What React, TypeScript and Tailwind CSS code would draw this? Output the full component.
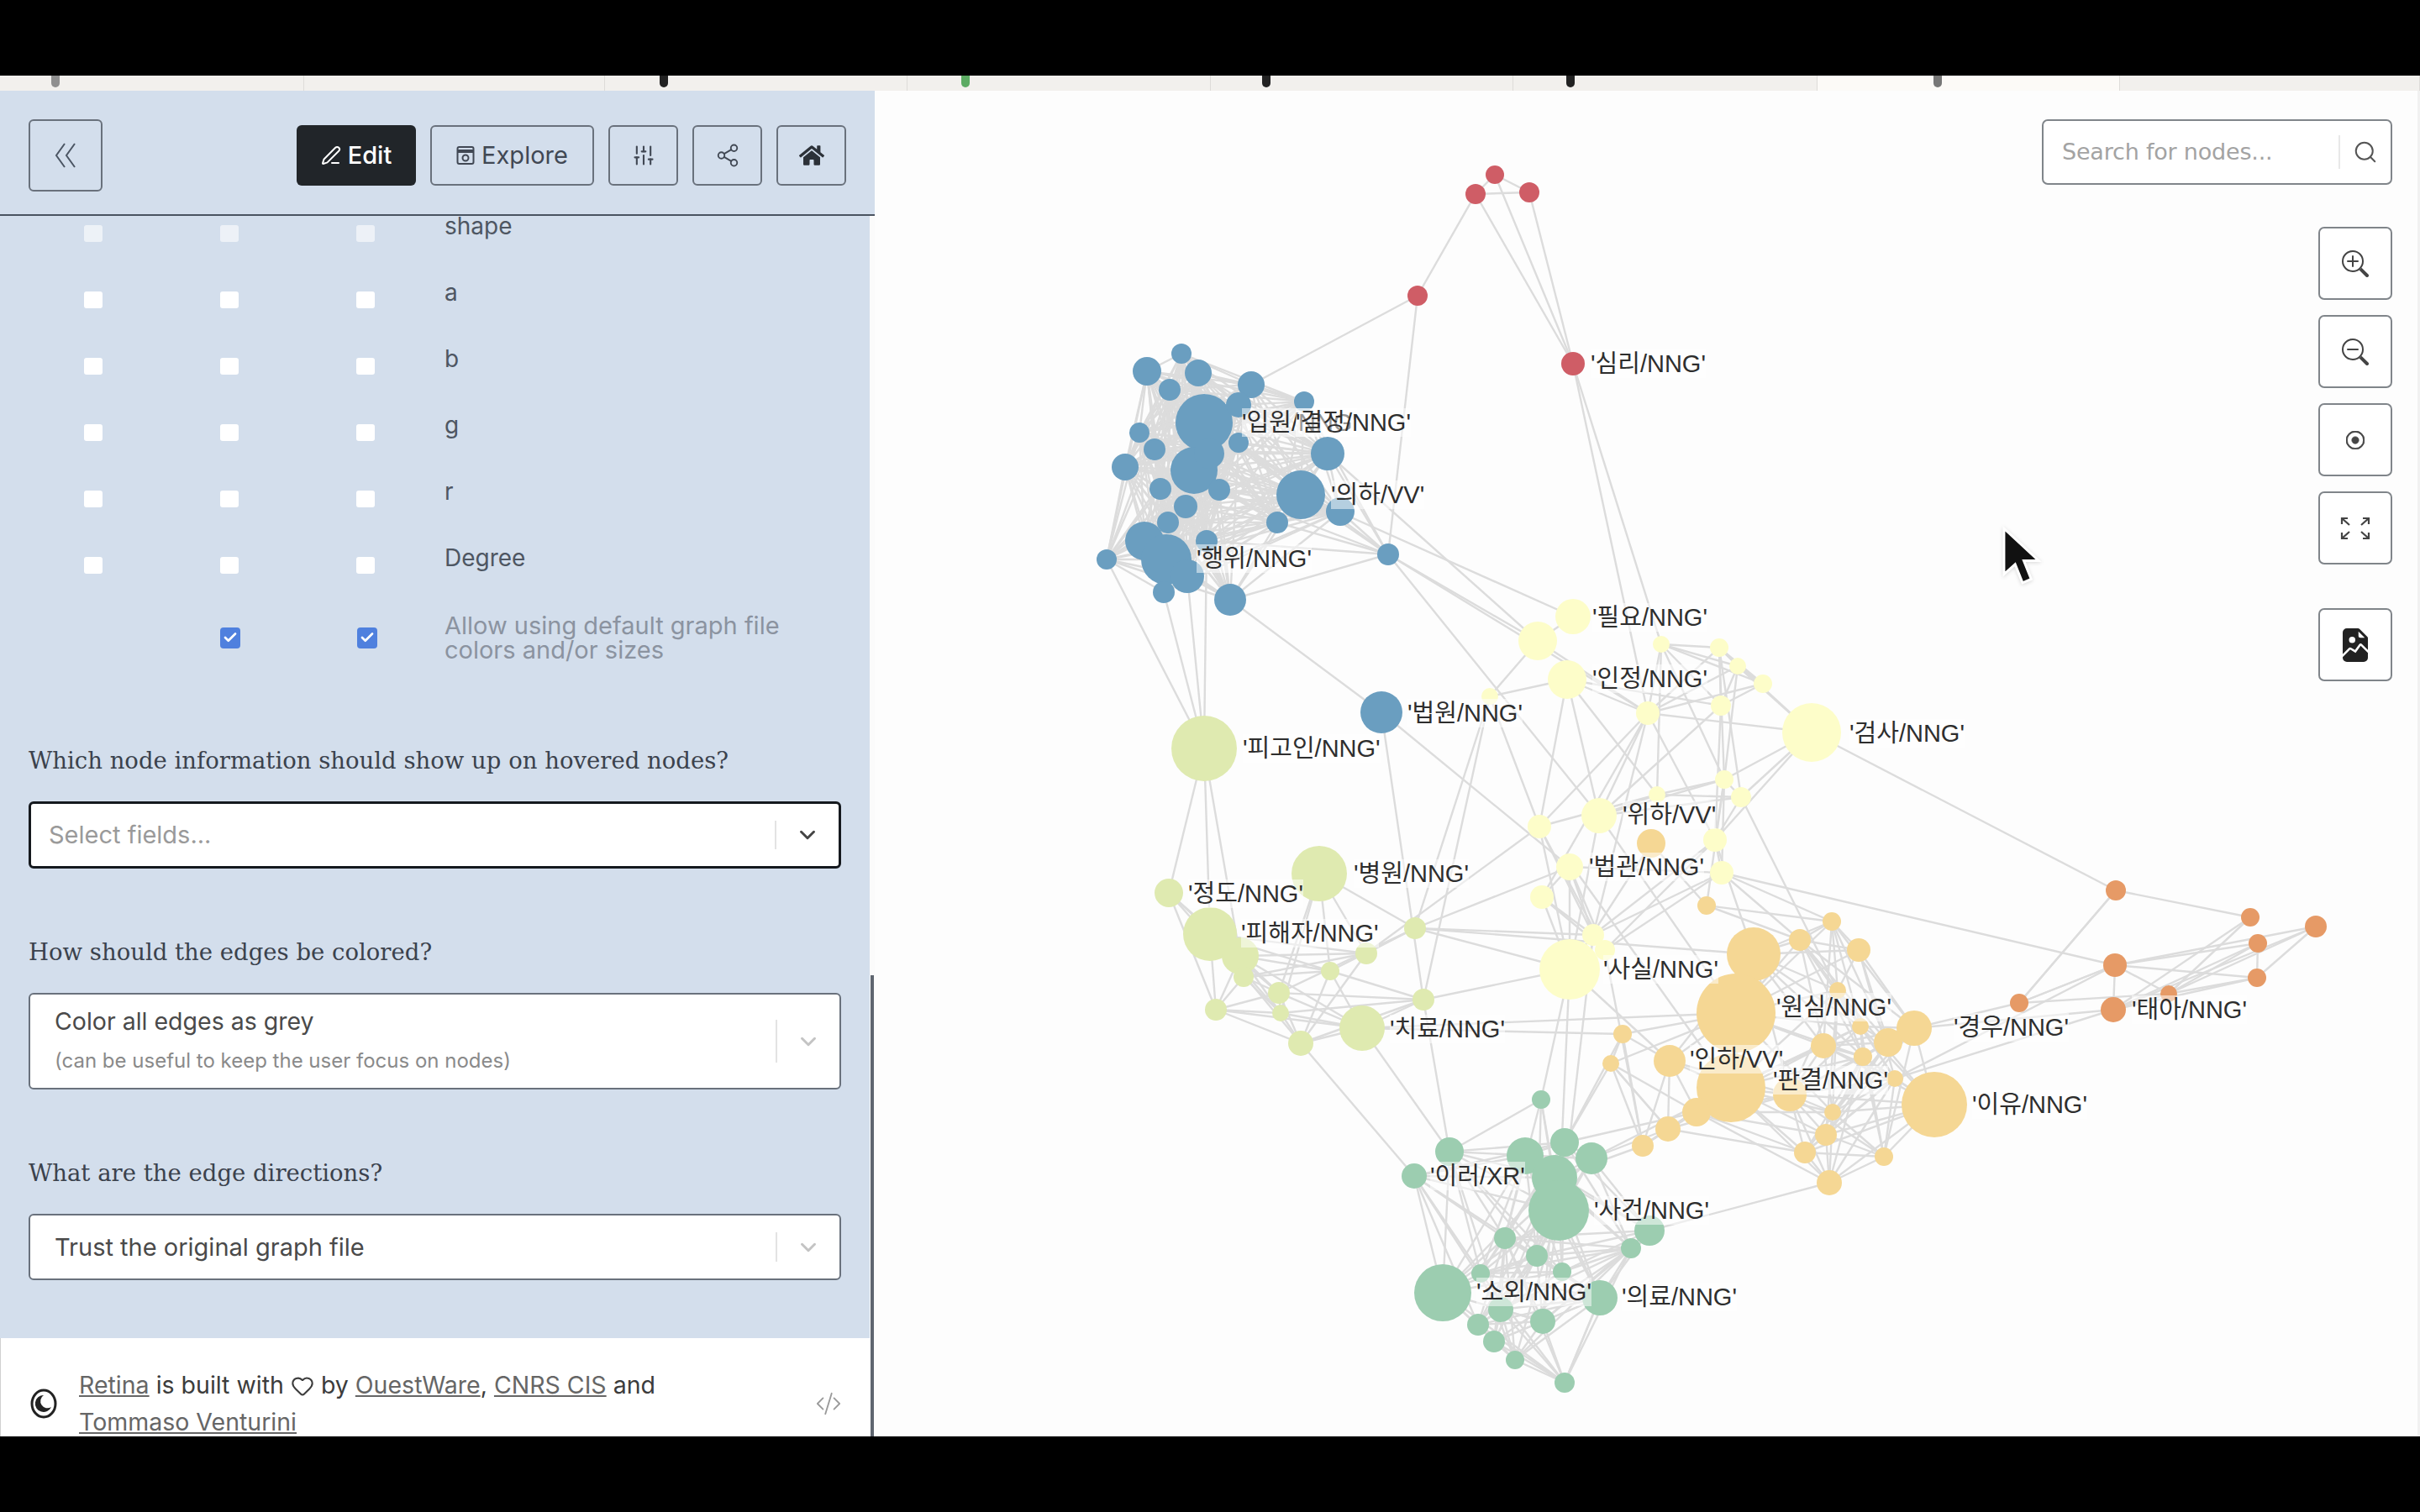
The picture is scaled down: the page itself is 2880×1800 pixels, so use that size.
import { ChevronDown, Check, Heart, PenLine, Search, Share2, SlidersVertical } from "lucide-react";
import { FaHome } from "react-icons/fa";
import { BsCodeSlash, BsFileEarmarkImageFill, BsRecordCircle, BsZoomIn, BsZoomOut } from "react-icons/bs";

const GRAPH_X = 1041;
const GRAPH_Y = 108;

type Cluster = { color: string; reach: number; keep: number; nodes: number[][] };

const clusters: Cluster[] = [
  {
    color: "#cf5d66",
    reach: 140,
    keep: 100,
    nodes: [[1779, 208, 11], [1756, 231, 12], [1820, 229, 12], [1687, 352, 12], [1872, 433, 14]],
  },
  {
    color: "#6a9ec0",
    reach: 240,
    keep: 92,
    nodes: [
      [1365, 442, 17], [1406, 421, 12], [1426, 444, 16], [1392, 464, 13], [1489, 458, 16], [1552, 478, 12],
      [1433, 503, 34], [1474, 482, 15], [1474, 527, 12], [1356, 515, 12], [1374, 535, 13], [1339, 556, 16],
      [1421, 560, 28], [1439, 540, 18], [1381, 582, 13], [1451, 583, 13], [1411, 603, 14], [1580, 540, 20],
      [1548, 589, 29], [1595, 609, 17], [1520, 622, 13], [1390, 622, 13], [1362, 644, 23], [1388, 666, 30],
      [1436, 644, 13], [1317, 666, 12], [1413, 686, 20], [1385, 705, 13], [1464, 714, 19], [1652, 660, 13],
    ],
  },
  {
    color: "#fdfdc9",
    reach: 190,
    keep: 60,
    nodes: [
      [1872, 734, 21], [1830, 763, 23], [1865, 809, 23], [1977, 767, 10], [2046, 771, 11], [2068, 793, 10],
      [2098, 814, 11], [2048, 840, 12], [1961, 849, 14], [1773, 829, 10], [2156, 872, 35], [2052, 928, 11],
      [2072, 949, 12], [1972, 946, 10], [1903, 971, 21], [1832, 984, 14], [2041, 1000, 14], [1868, 1032, 16],
      [2049, 1039, 14], [1835, 1068, 14], [1896, 1113, 13], [1910, 1131, 12], [1868, 1154, 36],
    ],
  },
  {
    color: "#f5d794",
    reach: 180,
    keep: 80,
    nodes: [
      [1965, 1004, 17], [2031, 1078, 11], [2087, 1136, 32], [2066, 1206, 47], [2142, 1119, 13], [2180, 1097, 11],
      [2212, 1131, 14], [2187, 1179, 10], [2278, 1224, 21], [2247, 1241, 17], [2170, 1245, 15], [2214, 1222, 10],
      [2217, 1258, 11], [1931, 1231, 11], [1917, 1266, 10], [1987, 1263, 19], [2060, 1295, 41], [2130, 1303, 20],
      [2019, 1324, 17], [1985, 1344, 15], [1955, 1364, 13], [2181, 1324, 10], [2173, 1351, 13], [2148, 1372, 13],
      [2242, 1377, 11], [2177, 1408, 15], [2302, 1315, 39], [2255, 1284, 10],
    ],
  },
  {
    color: "#dfeab0",
    reach: 190,
    keep: 70,
    nodes: [
      [1433, 891, 39], [1570, 1040, 33], [1391, 1063, 17], [1440, 1112, 32], [1476, 1138, 22], [1480, 1163, 12],
      [1684, 1105, 13], [1626, 1135, 13], [1583, 1156, 11], [1522, 1182, 13], [1447, 1202, 13], [1524, 1206, 10],
      [1694, 1190, 13], [1621, 1224, 27], [1548, 1242, 15],
    ],
  },
  {
    color: "#9ccdb0",
    reach: 200,
    keep: 80,
    nodes: [
      [1834, 1309, 11], [1725, 1371, 17], [1683, 1400, 15], [1815, 1376, 22], [1862, 1360, 17], [1894, 1379, 19],
      [1850, 1402, 27], [1855, 1441, 36], [1963, 1465, 18], [1941, 1486, 12], [1791, 1474, 13], [1829, 1495, 13],
      [1859, 1514, 11], [1762, 1516, 11], [1717, 1539, 34], [1904, 1545, 21], [1786, 1559, 15], [1759, 1577, 13],
      [1836, 1573, 15], [1778, 1597, 13], [1803, 1619, 11], [1862, 1646, 12],
    ],
  },
  {
    color: "#e69a66",
    reach: 270,
    keep: 70,
    nodes: [
      [2518, 1060, 12], [2678, 1092, 11], [2756, 1103, 13], [2687, 1123, 11], [2686, 1164, 11], [2517, 1149, 14],
      [2581, 1183, 10], [2515, 1202, 15], [2403, 1194, 11],
    ],
  },
];

// long edges that run between the clusters
const bridges = [
  [1756, 231, 1872, 433], [1779, 208, 1872, 433], [1820, 229, 1872, 433], [1687, 352, 1489, 458], [1687, 352, 1652, 660],
  [1872, 433, 1961, 849], [1872, 433, 1977, 767], [1652, 660, 1903, 971], [1652, 660, 1830, 763], [1548, 589, 1872, 734],
  [1580, 540, 1830, 763], [1652, 660, 1961, 849], [1464, 714, 1644, 848], [1385, 705, 1433, 891], [1413, 686, 1433, 891],
  [1317, 666, 1433, 891], [1436, 644, 1433, 891], [1433, 891, 1391, 1063], [1433, 891, 1440, 1112], [1433, 891, 1480, 1163],
  [1644, 848, 1868, 1032], [1644, 848, 1694, 1190], [1832, 984, 1626, 1135], [1868, 1032, 1684, 1105], [1773, 829, 1694, 1190],
  [1896, 1113, 1684, 1105], [2049, 1039, 2517, 1149], [2156, 872, 2518, 1060], [2403, 1194, 2518, 1060], [2403, 1194, 2517, 1149],
  [2278, 1224, 2403, 1194], [2278, 1224, 2515, 1202], [2255, 1284, 2515, 1202], [2255, 1284, 2517, 1149], [2278, 1224, 2302, 1315],
  [1894, 1379, 2060, 1295], [1963, 1465, 2177, 1408], [1621, 1224, 1725, 1371], [1548, 1242, 1683, 1400], [1694, 1190, 1725, 1371],
  [1868, 1154, 1855, 1441], [1868, 1154, 1834, 1309], [1931, 1231, 1862, 1360], [1917, 1266, 1862, 1360], [1862, 1646, 1904, 1545],
  [1868, 1154, 1684, 1105], [1868, 1154, 1694, 1190], [1903, 971, 2066, 1206], [1872, 1032, 2060, 1295], [2041, 1000, 2087, 1136],
  [2049, 1039, 2142, 1119], [2049, 1039, 2180, 1097], [1684, 1105, 2087, 1136], [1621, 1224, 1931, 1231], [1621, 1224, 2066, 1206],
  [1896, 1113, 1863, 1400], [1910, 1131, 1955, 1364], [1955, 1364, 1850, 1402], [1985, 1344, 1894, 1379], [2019, 1324, 1862, 1360],
  [1917, 1266, 1985, 1344], [1868, 1154, 1987, 1263], [1961, 849, 1835, 1068], [1961, 849, 1896, 1113], [2048, 840, 1903, 971],
  [1965, 1004, 1868, 1154], [1773, 829, 1684, 1105], [2052, 928, 2031, 1078], [2072, 949, 2187, 1179], [2156, 872, 1961, 849],
];

const edges: number[][] = [...bridges];
clusters.forEach(({ nodes, reach, keep }) => {
  nodes.forEach((a, i) => {
    nodes.slice(i + 1).forEach((b, j) => {
      const near = Math.hypot(a[0] - b[0], a[1] - b[1]) < reach;
      if (near && ((i * 31 + j * 17) * 2654435 >>> 0) % 100 < keep) edges.push([a[0], a[1], b[0], b[1]]);
    });
  });
});

const labels: [string, number, number][] = [
  ["'심리/NNG'", 1893, 433],
  ["'입원/NNG'", 1478, 503],
  ["'결정/NNG'", 1542, 503],
  ["'의하/VV'", 1584, 589],
  ["'행위/NNG'", 1424, 665],
  ["'필요/NNG'", 1895, 735],
  ["'인정/NNG'", 1895, 808],
  ["'법원/NNG'", 1675, 849],
  ["'피고인/NNG'", 1479, 891],
  ["'검사/NNG'", 2201, 873],
  ["'위하/VV'", 1931, 970],
  ["'법관/NNG'", 1891, 1032],
  ["'병원/NNG'", 1611, 1040],
  ["'정도/NNG'", 1414, 1064],
  ["'피해자/NNG'", 1477, 1111],
  ["'사실/NNG'", 1908, 1154],
  ["'원심/NNG'", 2114, 1199],
  ["'치료/NNG'", 1654, 1225],
  ["'경우/NNG'", 2325, 1223],
  ["'태아/NNG'", 2537, 1202],
  ["'인하/VV'", 2011, 1261],
  ["'판결/NNG'", 2110, 1286],
  ["'이유/NNG'", 2347, 1315],
  ["'이러/XR'", 1702, 1400],
  ["'사건/NNG'", 1897, 1441],
  ["'소외/NNG'", 1757, 1538],
  ["'의료/NNG'", 1930, 1544],
];

const tabIcons = [
  ["bg-[#8f8f8f]", 66], ["bg-[#222222]", 790], ["bg-[#5cab63]", 1149], ["bg-[#222222]", 1507], ["bg-[#222222]", 1869], ["bg-[#777777]", 2306],
] as const;

const fieldRows = ["shape", "a", "b", "g", "r", "Degree"];

function Box() {
  return <span className="h-5 w-[22px] rounded-[3px] bg-white" />;
}

function Checked() {
  return (
    <span className="flex h-[25px] w-[24px] items-center justify-center rounded-[4px] bg-[#4f80de]">
      <Check size={18} strokeWidth={3.5} className="text-white" />
    </span>
  );
}

function Question({ children }: { children: string }) {
  return (
    <h3 className="mb-[31px] mt-[81px] h-[36px] whitespace-nowrap font-['DejaVu_Serif'] text-[27.5px] leading-[36px] text-[#3b424d]">
      {children}
    </h3>
  );
}

function SelectBox({ focused, height, children }: { focused?: boolean; height: string; children: React.ReactNode }) {
  return (
    <div
      className={`flex w-[967px] items-center rounded-[6px] bg-white ${height} ${
        focused ? "border-[3px] border-[#15191e]" : "border-2 border-[#69717c]"
      }`}
    >
      <div className="flex-1 pl-[29px]">{children}</div>
      <div className="h-[46%] w-0.5 bg-[#e3e3e3]" />
      <ChevronDown
        size={30}
        strokeWidth={2.4}
        className={`mx-[22px] ${focused ? "text-[#444444]" : "text-[#c4c4c4]"}`}
      />
    </div>
  );
}

function MapButton({ children }: { children: React.ReactNode }) {
  return (
    <button className="flex h-[87px] w-[88px] items-center justify-center rounded-[7px] border-2 border-[#80858a] bg-white text-[#444444]">
      {children}
    </button>
  );
}

function HeaderButton({ children, width }: { children: React.ReactNode; width: string }) {
  return (
    <button
      className={`flex h-[72px] items-center justify-center gap-2 rounded-[6px] border-2 border-[#69717c] text-[29px] text-[#414854] ${width}`}
    >
      {children}
    </button>
  );
}

export default function App() {
  return (
    <div className="flex h-[1800px] w-[2880px] flex-col overflow-hidden bg-black font-['Inter','Noto_Sans_CJK_KR',sans-serif]">
      <div className="h-[90px] shrink-0" />

      {/* browser tabs, mostly cut off by the black bar */}
      <div className="relative flex h-[18px] shrink-0 bg-[#f2f0ed]">
        {[362, 358, 360, 361, 360, 362, 360, 357].map((w, i) => (
          <div
            key={i}
            style={{ width: w }}
            className={`h-full border-r border-[#dedcd9] ${i === 6 ? "bg-[#fcfaf7]" : ""}`}
          />
        ))}
        {tabIcons.map(([color, x]) => (
          <span key={x} style={{ left: x - 5 }} className={`absolute top-0 h-3.5 w-2.5 rounded-b-full ${color}`} />
        ))}
      </div>

      <div className="flex h-[1602px] shrink-0">
        <aside className="relative flex w-[1041px] shrink-0 flex-col bg-white">
          <header className="flex h-[149px] shrink-0 items-center border-b-2 border-[#4a5360] bg-[#d3deec] pl-[34px] pr-[34px] pt-[7px]">
            <button className="flex h-[86px] w-[88px] items-center justify-center rounded-[6px] border-2 border-[#69717c] text-[#4b5563]">
              <svg width="26" height="30" viewBox="0 0 26 30" fill="none" stroke="currentColor" strokeWidth="2">
                <path d="M12 1 2 15l10 14M24 1 14 15l10 14" />
              </svg>
            </button>
            <div className="ml-auto flex items-center gap-[17px]">
              <button className="flex h-[72px] w-[142px] items-center justify-center gap-2 rounded-[6px] bg-[#212529] text-[29px] font-medium text-white">
                <PenLine size={24} /> Edit
              </button>
              <HeaderButton width="w-[195px]">
                <svg width="22" height="24" viewBox="0 0 22 24" fill="none" stroke="currentColor" strokeWidth="2">
                  <rect x="1.5" y="2" width="19" height="20" rx="2" />
                  <path d="M1.5 7h19" strokeWidth="4" />
                  <circle cx="11" cy="15" r="3.5" />
                </svg>
                Explore
              </HeaderButton>
              <HeaderButton width="w-[83px]">
                <SlidersVertical size={28} strokeWidth={1.8} />
              </HeaderButton>
              <HeaderButton width="w-[83px]">
                <Share2 size={30} strokeWidth={1.5} />
              </HeaderButton>
              <HeaderButton width="w-[83px]">
                <FaHome size={30} className="text-[#2c3138]" />
              </HeaderButton>
            </div>
          </header>

          <div className="min-h-0 flex-1 overflow-hidden border-r-[6px] border-[#fbfbfb] bg-[#d3deec] pl-[34px]">
            <div className="-mt-[19px]">
              {fieldRows.map((name, i) => (
                <div key={name} className="flex h-[79px] items-center">
                  <div className={`ml-[66px] flex w-[429px] items-center gap-[140px] ${i === 0 ? "opacity-60" : ""}`}>
                    <Box />
                    <Box />
                    <Box />
                  </div>
                  <span className="-translate-y-[9px] text-[28px] text-[#4e5662]">{name}</span>
                </div>
              ))}
              <div className="flex h-[94px] items-center">
                <div className="ml-[228px] flex w-[267px] items-center gap-[139px]">
                  <Checked />
                  <Checked />
                </div>
                <span className="w-[440px] text-[29px] leading-[29px] text-[#8b93a0]">
                  Allow using default graph file colors and/or sizes
                </span>
              </div>
            </div>

            <Question>Which node information should show up on hovered nodes?</Question>
            <SelectBox focused height="h-[80px]">
              <span className="-ml-2 text-[29px] text-[#9a9a9a]">Select fields...</span>
            </SelectBox>

            <Question>How should the edges be colored?</Question>
            <SelectBox height="h-[115px]">
              <div className="-translate-y-[2px]">
                <div className="text-[28.5px] leading-[36px] text-[#4a4a4a]">Color all edges as grey</div>
                <div className="mt-[15px] text-[24px] leading-[28px] text-[#8a8a8a]">(can be useful to keep the user focus on nodes)</div>
              </div>
            </SelectBox>

            <Question>What are the edge directions?</Question>
            <SelectBox height="h-[79px]">
              <span className="text-[29px] text-[#4a4a4a]">Trust the original graph file</span>
            </SelectBox>
          </div>

          <footer className="flex h-[117px] shrink-0 items-center overflow-hidden border-l border-[#d0d0d0] bg-white pl-[35px] pr-[44px] pt-[38px]">
            <svg width="32" height="36" viewBox="0 0 32 36" className="shrink-0">
              <ellipse cx="16" cy="18" rx="14" ry="16" fill="none" stroke="#222222" strokeWidth="3" />
              <path d="M16 8a10 10 0 1 0 9 14 8 8 0 0 1-9-14Z" fill="#222222" />
            </svg>
            <p className="ml-[26px] w-[800px] shrink-0 text-[28.5px] leading-[44px] text-[#3c3c3c]">
              <span className="text-[#666666] underline">Retina</span> is built with{" "}
              <Heart size={28} strokeWidth={1.8} className="inline align-[-5px]" /> by{" "}
              <span className="text-[#666666] underline">OuestWare</span>,{" "}
              <span className="text-[#666666] underline">CNRS CIS</span> and
              <br />
              <span className="text-[#666666] underline">Tommaso Venturini</span>
            </p>
            <BsCodeSlash size={30} className="ml-auto shrink-0 translate-x-1 text-[#9a9a9a]" />
          </footer>

          <div className="absolute bottom-0 right-[1px] top-[1053px] w-1 bg-[#5f6670]" />
        </aside>

        <section className="relative flex-1 overflow-hidden bg-[#fdfdfd]">
          <svg
            className="absolute inset-0 h-full w-full"
            viewBox={`${GRAPH_X} ${GRAPH_Y} 1839 1602`}
          >
            {edges.map(([x1, y1, x2, y2], i) => (
              <line key={i} x1={x1} y1={y1} x2={x2} y2={y2} stroke="#dcdcdc" strokeWidth="2.4" />
            ))}
            {clusters.map(({ color, nodes }) =>
              nodes.map(([cx, cy, r]) => <circle key={`${cx}-${cy}`} cx={cx} cy={cy} r={r} fill={color} />)
            )}
            <circle cx="1644" cy="848" r="25" fill="#6a9ec0" />
          </svg>

          {labels.map(([text, x, y]) => (
            <span
              key={text}
              style={{ left: x - GRAPH_X, top: y - GRAPH_Y }}
              className="absolute -translate-y-1/2 whitespace-nowrap bg-white/50 font-['Liberation_Sans','Noto_Sans_CJK_KR',sans-serif] text-[29px] leading-[34px] text-[#2e2e2e]"
            >
              {text}
            </span>
          ))}

          {/* search and camera controls */}
          <div className="absolute right-[33px] top-[34px] flex h-[78px] w-[417px] items-center rounded-[7px] border-2 border-[#80858a] bg-white">
            <span className="flex-1 pl-[22px] font-['DejaVu_Sans'] text-[27px] tracking-[-0.2px] text-[#a3a3a3]">Search for nodes...</span>
            <div className="h-[40px] w-0.5 bg-[#e8e8e8]" />
            <Search size={30} strokeWidth={1.6} className="mx-[15px] text-[#555555]" />
          </div>
          <div className="absolute right-[33px] top-[162px] flex flex-col gap-[18px]">
            <MapButton><BsZoomIn size={32} /></MapButton>
            <MapButton><BsZoomOut size={32} /></MapButton>
            <MapButton><BsRecordCircle size={22} strokeWidth={0.6} /></MapButton>
            <MapButton>
              <svg width="36" height="28" viewBox="0 0 36 28" fill="none" stroke="#444444" strokeWidth="2.2">
                <path d="M2 9V2h7M2 2l9 8M34 9V2h-7M34 2l-9 8M2 19v7h7M2 26l9-8M34 19v7h-7M34 26l-9-8" />
              </svg>
            </MapButton>
            <div className="mt-[34px]">
              <MapButton><BsFileEarmarkImageFill size={40} className="text-[#222222]" /></MapButton>
            </div>
          </div>

          <div className="absolute bottom-0 right-0 top-0 w-[3px] bg-[#f1f1f1]" />

          <svg
            className="absolute left-[1341px] top-[518px] drop-shadow-sm"
            width="50"
            height="74"
            viewBox="0 0 34 50"
          >
            <path d="M2 2v37l9-8 6 15 7-3-6-15h12Z" fill="#111111" stroke="#ffffff" strokeWidth="2" />
          </svg>
        </section>
      </div>

      <div className="flex-1" />
    </div>
  );
}
